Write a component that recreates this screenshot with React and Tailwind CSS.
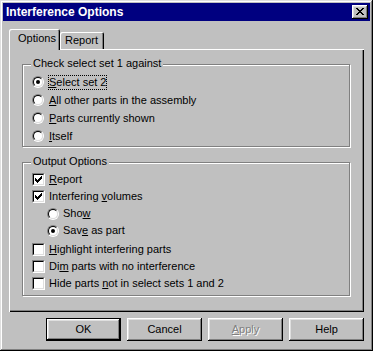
import React from 'react';

const font = "font-['Liberation_Sans',Arial,sans-serif]";

const Radio = ({ checked }) => (
  <span className="flex w-[12px] h-[12px] shrink-0 rounded-full border border-t-[#808080] border-l-[#808080] border-b-white border-r-white">
    <span className="flex flex-1 items-center justify-center rounded-full border border-t-black border-l-black border-b-[#dfdfdf] border-r-[#dfdfdf] bg-white">
      {checked && <span className="w-[4px] h-[4px] rounded-full bg-black" />}
    </span>
  </span>
);

const Check = ({ checked }) => (
  <span className="flex w-[13px] h-[13px] shrink-0 border border-t-[#808080] border-l-[#808080] border-b-white border-r-white">
    <span className="flex flex-1 items-center justify-center border border-t-black border-l-black border-b-[#dfdfdf] border-r-[#dfdfdf] bg-white">
      {checked && (
        <svg width="7" height="7" viewBox="0 0 7 7" shapeRendering="crispEdges">
          <path
            fill="#000"
            d="M6 0h1v1H6z M5 1h2v1H5z M0 2h1v1H0z M4 2h3v1H4z M0 3h2v1H0z M3 3h3v1H3z M0 4h5v1H0z M1 5h3v1H1z M2 6h1v1H2z"
          />
        </svg>
      )}
    </span>
  </span>
);

// label with one underlined mnemonic letter
const Label = ({ pre, u, post }) => (
  <span className="leading-[13px] whitespace-nowrap">
    {pre}
    <u className="underline underline-offset-[1px]">{u}</u>
    {post}
  </span>
);

const GroupBox = ({ title, className, children }) => (
  <div className={`relative border border-[#808080] shadow-[1px_1px_0_#fff,inset_1px_1px_0_#fff] ${className}`}>
    <span className="absolute -top-[8px] left-[8px] px-[2px] bg-[#c0c0c0] leading-[13px] whitespace-nowrap">{title}</span>
    {children}
  </div>
);

const Button = ({ children, isDefault, disabled }) => (
  <button
    className={`w-[75px] h-[23px] flex items-center justify-center bg-[#c0c0c0] ${
      isDefault
        ? 'border border-black shadow-[inset_-1px_-1px_0_#000,inset_1px_1px_0_#fff,inset_-2px_-2px_0_#808080,inset_2px_2px_0_#dfdfdf]'
        : 'shadow-[inset_-1px_-1px_0_#000,inset_1px_1px_0_#fff,inset_-2px_-2px_0_#808080,inset_2px_2px_0_#dfdfdf]'
    } ${disabled ? 'text-[#808080] [text-shadow:1px_1px_0_#fff]' : 'text-black'}`}
  >
    {children}
  </button>
);

export default function App() {
  return (
    <div
      className={`${font} text-[11px] text-black w-[373px] h-[351px] bg-[#c0c0c0] p-[3px] flex flex-col shadow-[inset_-1px_-1px_0_#000,inset_1px_1px_0_#dfdfdf,inset_-2px_-2px_0_#808080,inset_2px_2px_0_#fff]`}
    >
      {/* title bar */}
      <div className="h-[18px] bg-[#000080] flex items-center justify-between pl-[3px] pr-[2px]">
        <span className="text-white font-bold text-[12px] leading-[14px]">Interference Options</span>
        <button className="w-[16px] h-[14px] flex items-center justify-center bg-[#c0c0c0] shadow-[inset_-1px_-1px_0_#000,inset_1px_1px_0_#fff,inset_-2px_-2px_0_#808080,inset_2px_2px_0_#dfdfdf]">
          <svg width="8" height="7" viewBox="0 0 8 7" shapeRendering="crispEdges" className="-mt-px">
            <path
              fill="#000"
              d="M0 0h2v1H0z M6 0h2v1H6z M1 1h2v1H1z M5 1h2v1H5z M2 2h4v1H2z M3 3h2v1H3z M2 4h4v1H2z M1 5h2v1H1z M5 5h2v1H5z M0 6h2v1H0z M6 6h2v1H6z"
            />
          </svg>
        </button>
      </div>

      <div className="flex flex-col px-[6px] pt-[8px]">
        {/* tabs */}
        <div className="relative z-10 flex items-end h-[20px]">
          <div className="w-[51px] h-[21px] -mb-px bg-[#c0c0c0] rounded-t-[2px] pl-[9px] pt-[3px] leading-[13px] shadow-[inset_1px_1px_0_#fff,inset_-1px_0_0_#000,inset_-2px_0_0_#808080]">
            Options
          </div>
          <div className="w-[44px] h-[17px] bg-[#c0c0c0] rounded-t-[2px] pl-[5px] pt-[2px] leading-[13px] shadow-[inset_1px_1px_0_#fff,inset_-1px_0_0_#000,inset_-2px_0_0_#808080]">
            Report
          </div>
        </div>

        {/* panel */}
        <div className="h-[263px] flex flex-col pl-[13px] pr-[14px] pt-[15px] shadow-[inset_1px_1px_0_#fff,inset_-1px_-1px_0_#000,inset_-2px_-2px_0_#808080]">
          <GroupBox title="Check select set 1 against" className="pt-[8px] pb-[1px] pl-[9px]">
            <div className="flex items-center h-[18px] gap-[5px]">
              <Radio checked />
              <span className="-ml-[1px] border border-dotted border-black leading-[13px] whitespace-nowrap">
                <u className="underline underline-offset-[1px]">S</u>elect set 2
              </span>
            </div>
            <div className="flex items-center h-[18px] gap-[5px]">
              <Radio />
              <Label u="A" post="ll other parts in the assembly" />
            </div>
            <div className="flex items-center h-[18px] gap-[5px]">
              <Radio />
              <Label u="P" post="arts currently shown" />
            </div>
            <div className="flex items-center h-[18px] gap-[5px]">
              <Radio />
              <Label u="I" post="tself" />
            </div>
          </GroupBox>

          <GroupBox title="Output Options" className="mt-[15px] pt-[8px] pb-[3px] pl-[9px]">
            <div className="flex items-center h-[17px] gap-[4px]">
              <Check checked />
              <Label u="R" post="eport" />
            </div>
            <div className="flex items-center h-[17px] gap-[4px]">
              <Check checked />
              <Label pre="Interfering " u="v" post="olumes" />
            </div>
            <div className="flex items-center h-[17px] gap-[4px] ml-[15px]">
              <Radio />
              <Label pre="Sho" u="w" />
            </div>
            <div className="flex items-center h-[17px] gap-[4px] ml-[15px]">
              <Radio checked />
              <Label pre="Sav" u="e" post=" as part" />
            </div>
            <div className="flex items-center h-[17px] gap-[4px] mt-[2px]">
              <Check />
              <Label u="H" post="ighlight interfering parts" />
            </div>
            <div className="flex items-center h-[17px] gap-[4px]">
              <Check />
              <Label pre="Di" u="m" post=" parts with no interference" />
            </div>
            <div className="flex items-center h-[17px] gap-[4px]">
              <Check />
              <Label pre="Hide parts " u="n" post="ot in select sets 1 and 2" />
            </div>
          </GroupBox>
        </div>

        {/* buttons */}
        <div className="flex justify-end gap-[6px] mt-[6px]">
          <Button isDefault>OK</Button>
          <Button>Cancel</Button>
          <Button disabled>
            <span>
              <u className="underline underline-offset-[1px]">A</u>pply
            </span>
          </Button>
          <Button>Help</Button>
        </div>
      </div>
    </div>
  );
}
